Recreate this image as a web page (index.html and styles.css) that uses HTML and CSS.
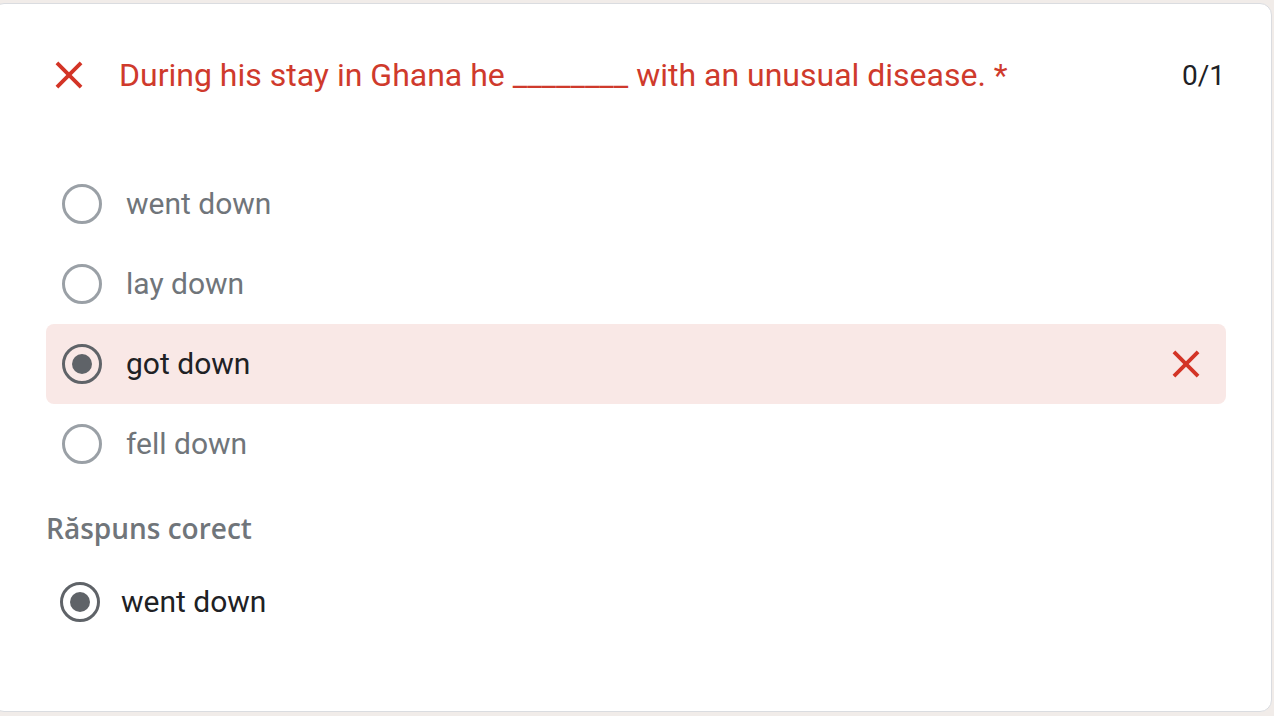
FILE: index.html
```html
<!DOCTYPE html>
<html lang="en">
<head>
<meta charset="utf-8">
<title>Quiz question</title>
<link rel="stylesheet" href="styles.css">
</head>
<body>
<div class="card">
  <div class="header">
    <svg class="icon-x" viewBox="0 0 24 24" width="46" height="46"><path d="M19 6.41L17.59 5 12 10.59 6.41 5 5 6.41 10.59 12 5 17.59 6.41 19 12 13.41 17.59 19 19 17.59 13.41 12z"/></svg>
    <div class="title">During his stay in Ghana he ________ with an unusual disease. *</div>
    <div class="points">0/1</div>
  </div>
  <div class="options">
    <div class="option"><span class="radio"></span><span class="label">went down</span></div>
    <div class="option"><span class="radio"></span><span class="label">lay down</span></div>
    <div class="option wrong"><span class="radio checked"></span><span class="label">got down</span>
      <svg class="icon-x row-x" viewBox="0 0 24 24" width="46" height="46"><path d="M19 6.41L17.59 5 12 10.59 6.41 5 5 6.41 10.59 12 5 17.59 6.41 19 12 13.41 17.59 19 19 17.59 13.41 12z"/></svg>
    </div>
    <div class="option"><span class="radio"></span><span class="label">fell down</span></div>
  </div>
  <div class="correct-title">Răspuns corect</div>
  <div class="correct"><span class="radio checked"></span><span class="label">went down</span></div>
</div>
</body>
</html>
```
FILE: styles.css
```css
html, body {
  margin: 0;
  padding: 0;
  background: #f1ece9;
  height: 100%;
  overflow: hidden;
}
body {
  font-family: Roboto, "Liberation Sans", sans-serif;
}
.card {
  box-sizing: border-box;
  margin: 3px 2px 0 -8px;
  height: 709px;
  background: #fff;
  border: 1px solid #dadce0;
  border-radius: 12px;
  padding: 49px 45px 0 53px;
}
.header {
  display: flex;
  align-items: center;
  height: 44px;
}
.icon-x {
  fill: #d33426;
  flex: none;
}
.title {
  margin-left: 27px;
  flex: 1;
  color: #cf3a2c;
  font-size: 32px;
  line-height: 44px;
  white-space: nowrap;
}
.points {
  color: #202124;
  font-size: 28px;
  margin-right: 1px;
}
.options {
  margin-top: 67px;
}
.option {
  display: flex;
  align-items: center;
  height: 80px;
  padding-left: 16px;
  padding-right: 17px;
  border-radius: 8px;
}
.option.wrong {
  background: #f9e8e6;
}
.radio {
  box-sizing: border-box;
  width: 40px;
  height: 40px;
  border-radius: 50%;
  border: 3.5px solid #9aa0a6;
  flex: none;
  display: flex;
  align-items: center;
  justify-content: center;
}
.radio.checked {
  border-color: #5f6368;
}
.radio.checked::after {
  content: "";
  width: 20px;
  height: 20px;
  border-radius: 50%;
  background: #5f6368;
}
.label {
  margin-left: 24px;
  font-size: 30px;
  line-height: 36px;
  padding-bottom: 1px;
  color: #70757a;
  flex: 1;
}
.wrong .label {
  color: #202124;
}
.correct-title {
  margin-top: 24px;
  line-height: 40px;
  font-family: "Open Sans", Roboto, sans-serif;
  font-size: 28px;
  font-weight: 600;
  color: #70757a;
  margin-left: 0;
}
.correct {
  display: flex;
  align-items: center;
  height: 80px;
  margin-top: 14px;
  padding-left: 14px;
}
.correct .label {
  color: #202124;
  margin-left: 21px;
}
```
